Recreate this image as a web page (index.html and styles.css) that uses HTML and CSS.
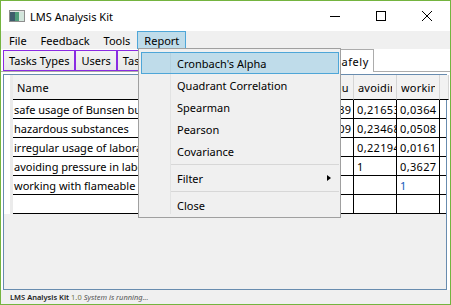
FILE: index.html
```html
<!DOCTYPE html>
<html lang="en">
<head>
  <meta charset="UTF-8" />
  <title>LMS Analysis Kit</title>
  <link rel="stylesheet" href="styles.css">
</head>
<body>
  <div class="window">
    <div class="titlebar">
      <svg class="app-icon" width="16" height="12" viewBox="0 0 16 12">
        <rect x="0.5" y="0.5" width="15" height="11" fill="#e4e4e4" stroke="#8e8e8e"/>
        <rect x="1" y="2" width="5" height="9" fill="#3e5c6c"/>
        <rect x="6" y="2" width="4" height="9" fill="#4f9c7a"/>
        <rect x="10" y="2" width="5" height="9" fill="#d3e6dc"/>
      </svg>
      <span class="title">LMS Analysis Kit</span>
      <div class="caption">
        <div class="cap-btn">
          <svg width="10" height="10" viewBox="0 0 10 10"><path d="M0 5.5H10" stroke="#000" stroke-width="1"/></svg>
        </div>
        <div class="cap-btn">
          <svg width="10" height="10" viewBox="0 0 10 10"><rect x="0.5" y="0.5" width="9" height="9" fill="none" stroke="#000"/></svg>
        </div>
        <div class="cap-btn">
          <svg width="10" height="10" viewBox="0 0 10 10"><path d="M0 0L10 10M10 0L0 10" stroke="#000" stroke-width="1"/></svg>
        </div>
      </div>
    </div>

    <div class="menubar">
      <span class="menu-item">File</span>
      <span class="menu-item">Feedback</span>
      <span class="menu-item">Tools</span>
      <span class="menu-item open">Report</span>
    </div>

    <div class="tabstrip">
      <div class="tab">Tasks Types</div>
      <div class="tab">Users</div>
      <div class="tab">Tasks Results</div>
      <div class="tab selected">Working Safely</div>
    </div>

    <div class="tab-panel">
      <div class="grid">
        <div class="row head">
          <div class="rh"></div>
          <div class="c"><span>Name</span></div>
          <div class="c"><span>safe usage of Bunsen burner</span></div>
          <div class="c"><span>hazardous substances</span></div>
          <div class="c"><span>irregular usage of laboratory</span></div>
          <div class="c"><span>avoiding pressure</span></div>
          <div class="c"><span>working with flameable</span></div>
          <div class="c fill"></div>
        </div>
        <div class="row">
          <div class="rh"></div>
          <div class="c name">safe usage of Bunsen burner</div>
          <div class="c">1</div>
          <div class="c">0,4521</div>
          <div class="c">0,2839</div>
          <div class="c">0,21653</div>
          <div class="c">0,0364</div>
          <div class="c fill"></div>
        </div>
        <div class="row">
          <div class="rh"></div>
          <div class="c name">hazardous substances</div>
          <div class="c"></div>
          <div class="c">1</div>
          <div class="c">0,1609</div>
          <div class="c">0,23468</div>
          <div class="c">0,0508</div>
          <div class="c fill"></div>
        </div>
        <div class="row">
          <div class="rh"></div>
          <div class="c name">irregular usage of laboratory equipment</div>
          <div class="c"></div>
          <div class="c"></div>
          <div class="c">1</div>
          <div class="c">0,22194</div>
          <div class="c">0,0161</div>
          <div class="c fill"></div>
        </div>
        <div class="row">
          <div class="rh"></div>
          <div class="c name">avoiding pressure in laboratory</div>
          <div class="c"></div>
          <div class="c"></div>
          <div class="c"></div>
          <div class="c">1</div>
          <div class="c">0,3627</div>
          <div class="c fill"></div>
        </div>
        <div class="row">
          <div class="rh"></div>
          <div class="c name">working with flameable materials</div>
          <div class="c"></div>
          <div class="c"></div>
          <div class="c"></div>
          <div class="c"></div>
          <div class="c current">1</div>
          <div class="c fill"></div>
        </div>
        <div class="row">
          <div class="rh"></div>
          <div class="c name"></div>
          <div class="c"></div>
          <div class="c"></div>
          <div class="c"></div>
          <div class="c"></div>
          <div class="c"></div>
          <div class="c fill"></div>
        </div>
      </div>
    </div>

    <div class="statusbar">
      <span class="app-name">LMS Analysis Kit</span>
      <span class="version">1.0</span>
      <span class="state">System is running...</span>
    </div>

    <div class="dropdown">
      <div class="dd-item hot">Cronbach's Alpha</div>
      <div class="dd-item">Quadrant Correlation</div>
      <div class="dd-item">Spearman</div>
      <div class="dd-item">Pearson</div>
      <div class="dd-item">Covariance</div>
      <div class="sep"></div>
      <div class="dd-item">Filter <span class="arrow"></span></div>
      <div class="sep"></div>
      <div class="dd-item">Close</div>
    </div>
  </div>
</body>
</html>
```

FILE: styles.css
```css
body {
  margin: 0;
  font-family: "Noto Sans", "Open Sans", sans-serif;
  font-size: 11px;
  color: #000;
}
.window {
  position: relative;
  width: 451px;
  height: 305px;
  box-sizing: border-box;
  border: 1px solid #74b43f;
  background: #fff;
  display: flex;
  flex-direction: column;
  overflow: hidden;
}
.titlebar {
  height: 30px;
  flex-shrink: 0;
  display: flex;
  align-items: center;
}
.app-icon {
  margin: 0 5px 0 8px;
}
.title {
  font-size: 11px;
}
.caption {
  margin-left: auto;
  display: flex;
  height: 100%;
}
.cap-btn {
  width: 46px;
  display: flex;
  align-items: center;
  justify-content: center;
}
.menubar {
  height: 18px;
  flex-shrink: 0;
  background: #f0f0f0;
  display: flex;
  padding-left: 1px;
}
.menu-item {
  padding: 0 6px;
  display: flex;
  align-items: center;
  border: 1px solid transparent;
}
.menu-item.open {
  background: rgba(38, 160, 218, 0.24);
  border-color: #4ea6d8;
}
.tabstrip {
  height: 22px;
  flex-shrink: 0;
  display: flex;
  align-items: flex-end;
  padding: 0 76px 0 2px;
}
.tab {
  height: 21px;
  box-sizing: border-box;
  padding: 0 5px;
  display: flex;
  align-items: center;
  border: 1px solid #8a2be2;
  background: linear-gradient(#f3f3f3, #e8e8e8);
  white-space: nowrap;
}
.tab.selected {
  margin-left: auto;
  height: 23px;
  margin-bottom: -1px;
  padding-right: 4px;
  letter-spacing: 0.6px;
  border-color: #acacac;
  border-bottom: none;
  background: #fff;
  position: relative;
  z-index: 1;
}
.tab-panel {
  flex: 1;
  display: flex;
  border-top: 1px solid #acacac;
  padding: 2px 3px 0 2px;
}
.grid {
  flex: 1;
  border: 1px solid #688caf;
  background: #f0f0f0;
}
.row {
  display: grid;
  grid-template-columns: 9px 213px 43px 43px 42px 43px 43px 6px;
  height: 19px;
}
.row.head {
  height: 25px;
}
.rh {
  background: linear-gradient(to right, #fff 6px, #ebebeb 6px);
}
.c {
  box-sizing: border-box;
  display: flex;
  align-items: center;
  padding: 0 2px 0 3px;
  overflow: hidden;
  white-space: nowrap;
  letter-spacing: 0.35px;
  background: #fff;
  border-right: 1px solid #000;
  border-bottom: 1px solid #000;
}
.c.name {
  padding-left: 1px;
  letter-spacing: 0;
}
.c.fill {
  border-right: none;
}
.c.current {
  color: #1259b8;
}
.head .c {
  background: #f2f2f2;
  border-right: 1px solid #d5d5d5;
  padding: 0 4px 0 4px;
  letter-spacing: 0.2px;
}
.head .c span {
  min-width: 0;
  overflow: hidden;
}
.statusbar {
  height: 14px;
  flex-shrink: 0;
  background: #f0f0f0;
  display: flex;
  align-items: center;
  padding-left: 9px;
  font-size: 7.5px;
  gap: 2px;
}
.app-name {
  color: #222;
  font-weight: 600;
}
.version {
  color: #74744a;
}
.state {
  color: #555;
  font-style: italic;
}
.dropdown {
  position: absolute;
  left: 137px;
  top: 47px;
  width: 203px;
  height: 170px;
  box-sizing: border-box;
  border: 1px solid #a0a0a0;
  padding: 3px 1px 0 2px;
  background: linear-gradient(to right, transparent 31px, #e2e3e3 31px, #e2e3e3 32px, transparent 32px) no-repeat 0 4px / 100% 161px, #f0f0f0;
  z-index: 5;
}
.dd-item {
  height: 22px;
  box-sizing: border-box;
  border: 1px solid transparent;
  padding-left: 35px;
  display: flex;
  align-items: center;
}
.dd-item.hot {
  background: rgba(38, 160, 218, 0.24);
  border-color: #4ea6d8;
}
.sep {
  height: 1px;
  background: #d7d7d7;
  margin: 2px 0 2px 30px;
}
.arrow {
  margin-left: auto;
  margin-right: 7px;
  width: 0;
  height: 0;
  border-top: 3.5px solid transparent;
  border-bottom: 3.5px solid transparent;
  border-left: 4px solid #000;
}
```
